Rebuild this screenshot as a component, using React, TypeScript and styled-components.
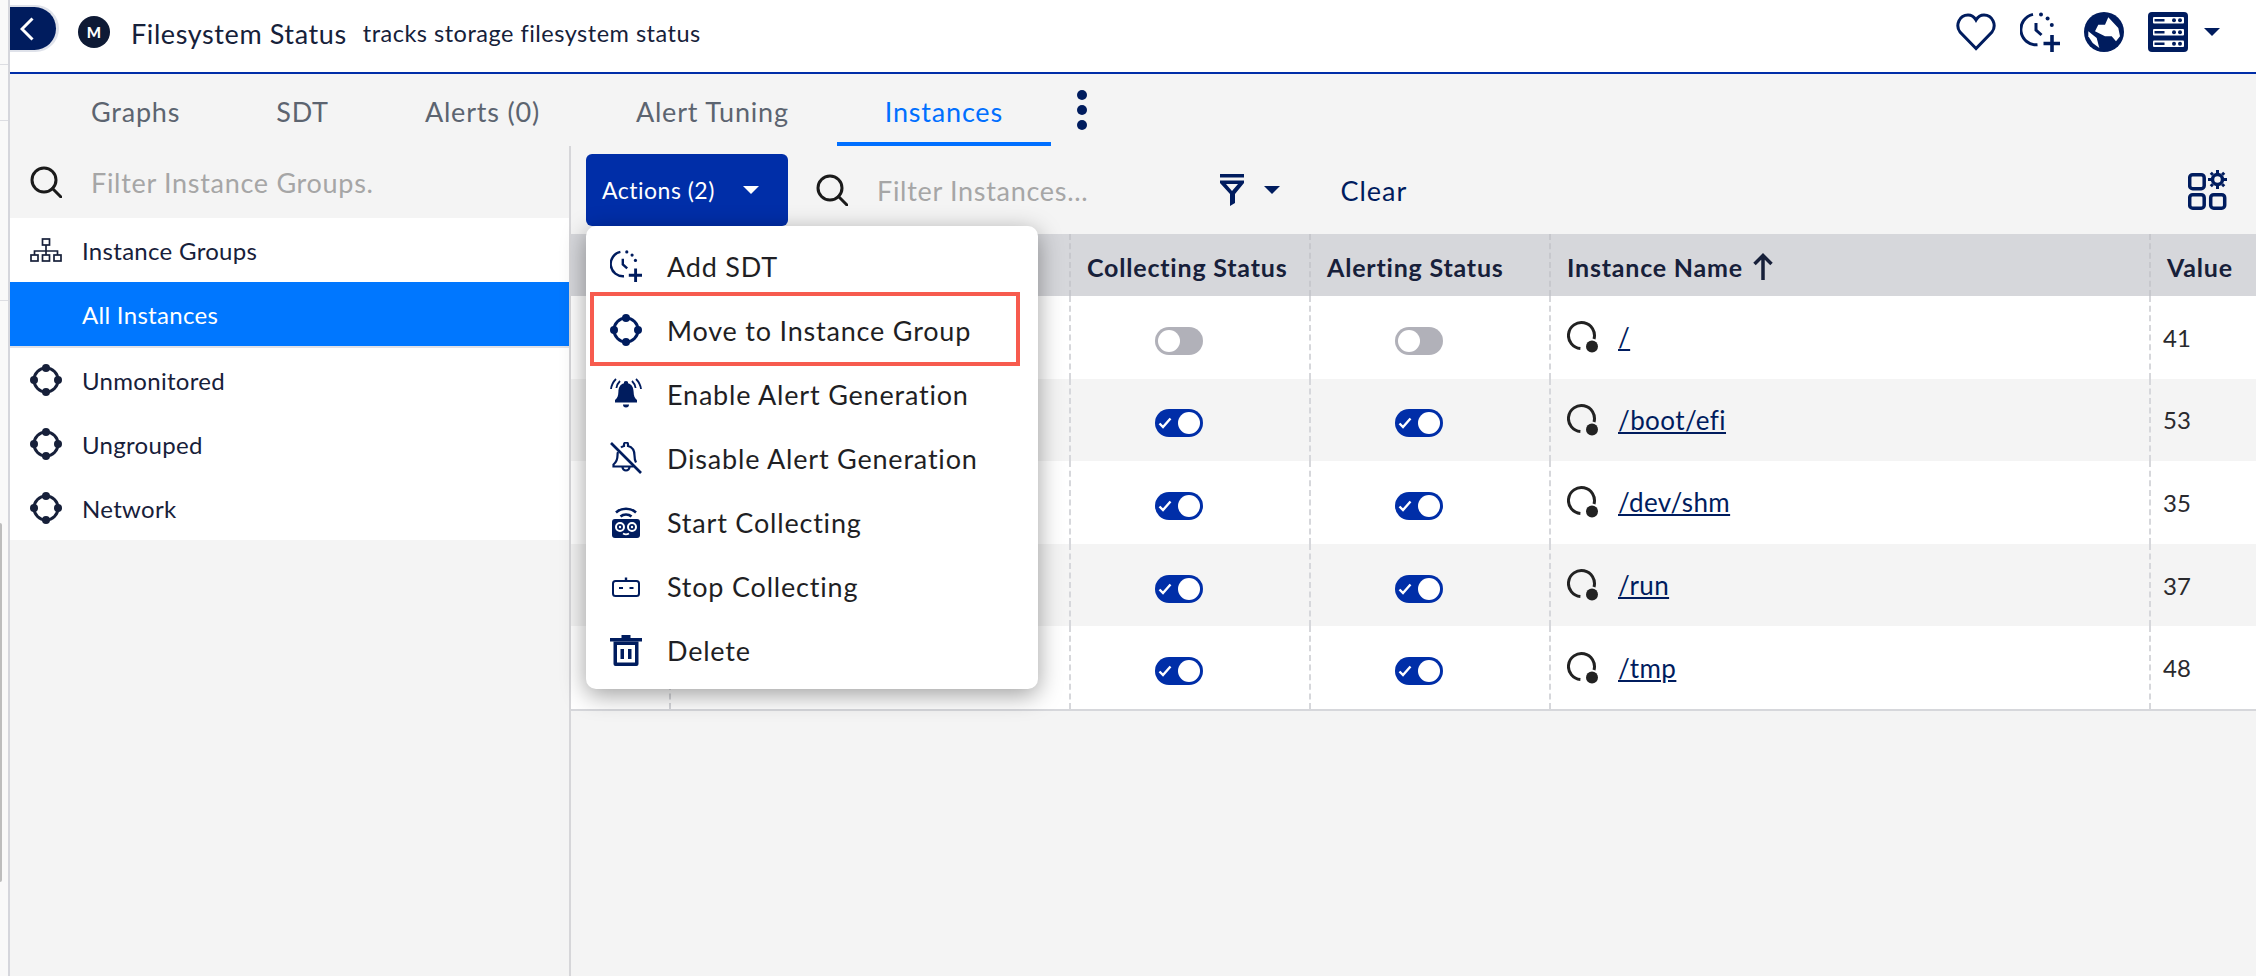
import React from 'react'
import styled, { createGlobalStyle } from 'styled-components'

const NAVY = '#001c5e'
const INK = '#17203a'
const BLUE = '#002ea8'
const RULE = '#d6d7db'

const GlobalStyle = createGlobalStyle`
	html, body {
		margin: 0;
		padding: 0;
		background: #f4f4f4;
	}
	body {
		font-family: 'Lato', 'Liberation Sans', sans-serif;
		color: ${INK};
	}
`

const Page = styled.div`
	display: flex;
	width: 2256px;
	height: 976px;
	overflow: hidden;
`

const Strip = styled.div`
	position: relative;
	flex: none;
	width: 8px;
	background: #f9f9f9;
	border-right: 2px solid #d5d6dc;
`

const StripBand = styled.div<{ $h: number }>`
	height: ${(p) => p.$h}px;
	border-bottom: 1px solid #dcdde2;
`

const StripThumb = styled.div`
	position: absolute;
	left: 0;
	top: 523px;
	width: 2px;
	height: 359px;
	background: #bdbdbd;
	border-radius: 0 2px 2px 0;
`

const Main = styled.div`
	flex: 1;
	display: flex;
	flex-direction: column;
	min-width: 0;
`

const Header = styled.header`
	flex: none;
	display: flex;
	align-items: center;
	box-sizing: border-box;
	height: 74px;
	background: #fff;
	border-bottom: 2px solid ${BLUE};
	padding: 0 36px 8px 0;
`

const BackButton = styled.button`
	flex: none;
	display: flex;
	align-items: center;
	justify-content: flex-start;
	align-self: flex-start;
	width: 46px;
	height: 43px;
	margin-top: 7px;
	padding: 0 0 0 10px;
	background: ${NAVY};
	border: 0;
	border-radius: 0 22px 22px 0;
	box-shadow: 1px 0 0 2px #dfe2ea;
`

const Logo = styled.span`
	flex: none;
	display: flex;
	align-items: center;
	justify-content: center;
	width: 32px;
	height: 32px;
	margin: 0 21px 0 22px;
	border-radius: 50%;
	background: #0e1a35;
	color: #fff;
	font-size: 15px;
	font-weight: 900;
`

const Title = styled.h1`
	margin: 3px 16px 0 0;
	font-size: 27px;
	font-weight: 400;
	letter-spacing: 0.6px;
	color: #16213a;
`

const Subtitle = styled.span`
	margin-top: 1px;
	font-size: 23.5px;
	letter-spacing: 0.5px;
	color: #16213a;
`

const HeaderIcons = styled.div`
	margin-left: auto;
	display: flex;
	align-items: center;
	gap: 24px;
	color: ${NAVY};
`

const HeaderCaret = styled.span`
	margin-left: -8px;
	line-height: 0;
`

const Tabs = styled.nav`
	flex: none;
	display: flex;
	align-items: center;
	height: 72px;
	padding-left: 33px;
`

const Tab = styled.div<{ $active?: boolean }>`
	display: flex;
	align-items: center;
	height: 72px;
	padding: 6px 48px 0;
	box-sizing: border-box;
	border-bottom: 4px solid ${(p) => (p.$active ? '#006fff' : 'transparent')};
	font-size: 27px;
	letter-spacing: 0.8px;
	color: ${(p) => (p.$active ? '#006fff' : '#5c6470')};
`

const Kebab = styled.div`
	display: flex;
	flex-direction: column;
	gap: 5px;
	margin-left: 26px;
`

const KebabDot = styled.span`
	width: 10px;
	height: 10px;
	border-radius: 50%;
	background: ${NAVY};
`

const Body = styled.div`
	flex: 1;
	display: flex;
	min-height: 0;
`

const SidePanel = styled.aside`
	flex: none;
	width: 559px;
	border-right: 2px solid #d6d6d9;
`

const SideSearch = styled.div`
	display: flex;
	align-items: center;
	gap: 29px;
	height: 72px;
	padding-left: 20px;
	color: #1a1a1a;
`

const Placeholder = styled.span`
	font-size: 27px;
	letter-spacing: 0.7px;
	color: #a6a6a6;
`

const GroupList = styled.ul`
	list-style: none;
	margin: 0;
	padding: 0;
	background: #fff;
`

const GroupRow = styled.li<{ $active?: boolean }>`
	display: flex;
	align-items: center;
	gap: 20px;
	height: 64px;
	padding-left: 20px;
	font-size: 24px;
	letter-spacing: 0.3px;
	color: ${(p) => (p.$active ? '#fff' : INK)};
	background: ${(p) => (p.$active ? '#0077ff' : 'transparent')};
	border-bottom: ${(p) => (p.$active ? '2px solid #dfe1e8' : '0')};
`

const IconGap = styled.span`
	flex: none;
	width: 32px;
`

const Pane = styled.section`
	flex: 1;
	min-width: 0;
`

const Toolbar = styled.div`
	display: flex;
	align-items: center;
	height: 88px;
	padding: 0 28px 0 15px;
`

const ActionsWrap = styled.div`
	position: relative;
	flex: none;
`

const ActionsButton = styled.button`
	display: flex;
	align-items: center;
	width: 202px;
	height: 72px;
	padding: 0 0 0 16px;
	border: 0;
	border-radius: 6px;
	background: ${BLUE};
	color: #fff;
	font-family: inherit;
	font-size: 23px;
	letter-spacing: 0.5px;
`

const ActionsCaret = styled.span`
	margin-left: 28px;
	line-height: 0;
`

const Menu = styled.ul`
	position: absolute;
	z-index: 5;
	top: 72px;
	left: 0;
	width: 452px;
	margin: 0;
	padding: 8px 0 7px;
	box-sizing: border-box;
	list-style: none;
	background: #fff;
	border-radius: 10px;
	box-shadow: 0 6px 24px rgba(0, 0, 0, 0.38);
`

const MenuItem = styled.li<{ $marked?: boolean }>`
	position: relative;
	display: flex;
	align-items: center;
	gap: 25px;
	height: 64px;
	padding-left: 24px;
	font-size: 27px;
	letter-spacing: 0.8px;
	color: ${NAVY};

	&::after {
		content: '';
		display: ${(p) => (p.$marked ? 'block' : 'none')};
		position: absolute;
		left: 4px;
		top: -6px;
		width: 430px;
		height: 74px;
		box-sizing: border-box;
		border: 4px solid #f75b4e;
	}
`

const MenuLabel = styled.span`
	color: #1f1f24;
`

const FilterSearch = styled.div`
	display: flex;
	align-items: center;
	gap: 29px;
	margin-left: 28px;
	color: #1a1a1a;
`

const FilterWrap = styled.div`
	display: flex;
	align-items: center;
	gap: 20px;
	margin-left: 132px;
	color: ${NAVY};
`

const ClearLink = styled.span`
	margin-left: 60px;
	font-size: 27px;
	letter-spacing: 1px;
	color: ${NAVY};
`

const GearWrap = styled.span`
	margin-left: auto;
	line-height: 0;
	color: ${NAVY};
`

const Table = styled.table`
	width: 1685px;
	table-layout: fixed;
	border-collapse: separate;
	border-spacing: 0;
	border-bottom: 2px solid ${RULE};
`

const HeadCell = styled.th<{ $w: number }>`
	width: ${(p) => p.$w}px;
	height: 62px;
	box-sizing: border-box;
	padding: 3px 0 0 16px;
	background: ${RULE};
	border-left: 2px dashed #c7c8cd;
	text-align: left;
	font-size: 25px;
	font-weight: 700;
	letter-spacing: 0.8px;
	color: ${INK};
	white-space: nowrap;

	&:first-child {
		border-left: 0;
	}
`

const HeadInner = styled.span`
	display: inline-flex;
	align-items: center;
	gap: 10px;
`

const Row = styled.tr<{ $odd: boolean }>`
	background: ${(p) => (p.$odd ? '#f4f4f4' : '#fff')};
`

const Cell = styled.td`
	height: 82.6px;
	box-sizing: border-box;
	padding: 0 0 0 12px;
	border-left: 2px dashed ${RULE};
	text-align: left;
	font-size: 24px;
	color: #2a2a2e;

	&:first-child {
		border-left: 0;
	}
`

const ToggleCell = styled(Cell)`
	padding: 3px 22px 0 0;
	text-align: center;
`

const NameWrap = styled.div`
	display: flex;
	align-items: center;
	gap: 19px;
	padding-left: 4px;
`

const NameLink = styled.a`
	font-size: 26px;
	letter-spacing: 0.4px;
	color: ${NAVY};
	text-decoration: underline;
`

const Toggle = styled.span<{ $on: boolean }>`
	display: inline-flex;
	align-items: center;
	justify-content: ${(p) => (p.$on ? 'space-between' : 'flex-start')};
	width: 48px;
	height: 28px;
	padding: 0 3px;
	box-sizing: border-box;
	border-radius: 14px;
	background: ${(p) => (p.$on ? BLUE : '#b1b1b9')};
	vertical-align: middle;
`

const Thumb = styled.span`
	width: 22px;
	height: 22px;
	border-radius: 50%;
	background: #fff;
`

const Search = () => (
	<svg width="32" height="32" viewBox="0 0 32 32" fill="none" stroke="currentColor" strokeWidth="3">
		<circle cx="14" cy="14" r="12" />
		<path d="M22.5 22.5 31 31" strokeLinecap="round" />
	</svg>
)

const Caret = ({ color = 'currentColor' }: { color?: string }) => (
	<svg width="16" height="8" viewBox="0 0 16 8" style={{ display: 'block' }}>
		<path d="M0 0h16L8 8z" fill={color} />
	</svg>
)

const GroupIcon = () => (
	<svg width="32" height="32" viewBox="0 0 32 32" fill="none" stroke="currentColor">
		<circle cx="16" cy="16" r="12" strokeWidth="3" />
		<g fill="currentColor" stroke="none">
			<circle cx="16" cy="4" r="4" />
			<circle cx="28" cy="16" r="4" />
			<circle cx="16" cy="28" r="4" />
			<circle cx="4" cy="16" r="4" />
		</g>
	</svg>
)

const TreeIcon = () => (
	<svg width="32" height="24" viewBox="0 0 32 24" fill="none" stroke="currentColor" strokeWidth="1.7">
		<rect x="12.5" y="1" width="7" height="6" />
		<path d="M16 7v6M4.5 17v-4h23v4M16 13v4" />
		<rect x="1" y="17" width="7" height="6" />
		<rect x="12.5" y="17" width="7" height="6" />
		<rect x="24" y="17" width="7" height="6" />
	</svg>
)

const ClockPlus = ({ size }: { size: number }) => (
	<svg width={size} height={size} viewBox="0 0 40 40" fill="none" stroke="currentColor" strokeWidth="3">
		<path d="M13 2.4A15.4 15.4 0 0 0 17.5 32.8" />
		<path d="M16 11v7l5.5 5" />
		<g fill="currentColor" stroke="none">
			<circle cx="21" cy="2.4" r="2" />
			<circle cx="27.6" cy="6.4" r="2" />
			<circle cx="31.8" cy="13" r="2" />
		</g>
		<path d="M32 23v17M23.5 31.5h16.5" strokeWidth="3.6" />
	</svg>
)

const Bell = () => (
	<svg width="32" height="32" viewBox="0 0 32 32" fill="none" stroke="currentColor" strokeWidth="1.8">
		<path
			d="M16 3a2 2 0 0 1 2 2.3c4 1 5.5 4.5 5.6 8.5.1 4 1 6.5 3.4 8.2v2.5H5V22c2.4-1.7 3.3-4.2 3.4-8.2.1-4 1.6-7.5 5.6-8.5A2 2 0 0 1 16 3z"
			fill="currentColor"
			stroke="none"
		/>
		<path d="M13 26.5h6a3 3 0 0 1-6 0z" fill="currentColor" stroke="none" />
		<path d="M6 1C3 4 1.5 7 1 11M10 3C8 5 6.8 7 6.4 10M26 1c3 3 4.5 6 5 10M22 3c2 2 3.2 4 3.6 7" />
	</svg>
)

const BellOff = () => (
	<svg width="32" height="32" viewBox="0 0 32 32" fill="none" stroke="currentColor" strokeWidth="2.2">
		<path d="M11 5.5c1-.8 2-1.2 3-1.500V2.500a2 2 0 0 1 4 0V4c4 1 6.500 4.500 6.500 9.500 0 3 .5 5 1.500 7" />
		<path d="M8 10c-.4 1-.5 2.200-.5 3.500 0 4-1.500 7-4 9v2h20" />
		<path d="M12.500 25a3.500 3.500 0 0 0 7 0" />
		<path d="M1 1l30 30" strokeWidth="2.6" />
	</svg>
)

const RobotOn = () => (
	<svg width="32" height="32" viewBox="0 0 32 32" fill="none">
		<path d="M6 6.500C11.500 1.500 20.500 1.500 26 6.500M10.500 10.500c3-2.700 8-2.700 11 0" stroke="currentColor" strokeWidth="2.6" />
		<rect x="2" y="13" width="28" height="19" rx="3" fill="currentColor" />
		<circle cx="10" cy="21" r="4" stroke="#fff" strokeWidth="2" />
		<circle cx="22" cy="21" r="4" stroke="#fff" strokeWidth="2" />
		<circle cx="10" cy="21" r="1.2" fill="#fff" />
		<circle cx="22" cy="21" r="1.2" fill="#fff" />
		<path d="M13 27.500c2 1.200 4 1.200 6 0" stroke="#fff" strokeWidth="1.8" />
	</svg>
)

const RobotOff = () => (
	<svg width="32" height="32" viewBox="0 0 32 32" fill="none" stroke="currentColor" strokeWidth="2">
		<rect x="3" y="11" width="26" height="15" rx="2.5" />
		<path d="M16 7.500v3.500" strokeWidth="2.4" />
		<path d="M9 18h4M19.500 18h4" />
	</svg>
)

const Trash = () => (
	<svg width="32" height="32" viewBox="0 0 32 32" fill="currentColor">
		<path d="M11.500 1h9v3h-9zM0 4h32v3.500H0z" />
		<path d="M3.500 7.500h25V30a2 2 0 0 1-2 2h-21a2 2 0 0 1-2-2zM7 11v17.500h18V11z" fillRule="evenodd" />
		<path d="M10.500 15h3.500v10h-3.500zM18 15h3.500v10H18z" />
	</svg>
)

const StatusIcon = () => (
	<svg width="32" height="32" viewBox="0 0 32 32" fill="none" style={{ flex: 'none' }}>
		<path d="M27 18A13 13 0 1 0 13.4 27.5" stroke="#222" strokeWidth="3" />
		<circle cx="25" cy="25.5" r="6" fill="#222" />
	</svg>
)

const menuItems: { label: string; icon: React.ReactNode; marked?: boolean }[] = [
	{ label: 'Add SDT', icon: <ClockPlus size={32} /> },
	{ label: 'Move to Instance Group', icon: <GroupIcon />, marked: true },
	{ label: 'Enable Alert Generation', icon: <Bell /> },
	{ label: 'Disable Alert Generation', icon: <BellOff /> },
	{ label: 'Start Collecting', icon: <RobotOn /> },
	{ label: 'Stop Collecting', icon: <RobotOff /> },
	{ label: 'Delete', icon: <Trash /> },
]

const rows = [
	{ name: '/', value: 41, on: false },
	{ name: '/boot/efi', value: 53, on: true },
	{ name: '/dev/shm', value: 35, on: true },
	{ name: '/run', value: 37, on: true },
	{ name: '/tmp', value: 48, on: true },
]

const StatusToggle = ({ on }: { on: boolean }) => (
	<Toggle $on={on}>
		{on && (
			<svg width="14" height="12" viewBox="0 0 14 12" fill="none" stroke="#fff" strokeWidth="2.4">
				<path d="M1.500 6.500 5 10l7.500-8.500" />
			</svg>
		)}
		<Thumb />
	</Toggle>
)

export default function App() {
	return (
		<Page>
			<GlobalStyle />
			<Strip>
				<StripBand $h={64} />
				<StripBand $h={55} />
				<StripBand $h={179} />
				<StripThumb />
			</Strip>
			<Main>
				<Header>
					<BackButton aria-label="Back">
						<svg width="14" height="24" viewBox="0 0 14 24" fill="none" stroke="#fff" strokeWidth="3">
							<path d="M12.500 1.500 2 12l10.500 10.500" />
						</svg>
					</BackButton>
					<Logo>M</Logo>
					<Title>Filesystem Status</Title>
					<Subtitle>tracks storage filesystem status</Subtitle>
					<HeaderIcons>
						<svg width="40" height="40" viewBox="0 0 40 40" fill="none" stroke="currentColor" strokeWidth="3">
							<path d="M20 36.500 4 20C-1 13 3.500 3 12 3c3.500 0 6.300 2 8 5 1.700-3 4.500-5 8-5 8.500 0 13 10 8 17z" />
						</svg>
						<ClockPlus size={40} />
						<svg width="40" height="40" viewBox="0 0 40 40">
							<circle cx="20" cy="20" r="20" fill="currentColor" />
							<path d="M24.300 5.300 34.300 16 36 24.300 32 29.300 27.700 24.300H21L11 19.300 14.300 12.700H21z" fill="#fff" />
							<path d="M4.300 19.300 12.700 26 15.300 36 8.700 31 4.300 24.300z" fill="#fff" />
						</svg>
						<svg width="40" height="40" viewBox="0 0 40 40">
							<rect width="40" height="40" rx="4" fill="currentColor" />
							{[5, 17, 28.5].map((y) => (
								<g key={y}>
									<rect x="5" y={y} width="31" height="6.500" rx="1" fill="#fff" />
									<rect x="6.500" y={y + 2} width="10" height="2.500" fill="currentColor" />
									<circle cx="26" cy={y + 3.2} r="2" fill="currentColor" />
									<circle cx="32" cy={y + 3.2} r="2" fill="currentColor" />
								</g>
							))}
						</svg>
						<HeaderCaret>
							<Caret />
						</HeaderCaret>
					</HeaderIcons>
				</Header>
				<Tabs>
					<Tab>Graphs</Tab>
					<Tab>SDT</Tab>
					<Tab>Alerts (0)</Tab>
					<Tab>Alert Tuning</Tab>
					<Tab $active>Instances</Tab>
					<Kebab>
						<KebabDot />
						<KebabDot />
						<KebabDot />
					</Kebab>
				</Tabs>
				<Body>
					<SidePanel>
						<SideSearch>
							<Search />
							<Placeholder>Filter Instance Groups.</Placeholder>
						</SideSearch>
						<GroupList>
							<GroupRow>
								<TreeIcon />
								Instance Groups
							</GroupRow>
							<GroupRow $active>
								<IconGap />
								All Instances
							</GroupRow>
							{['Unmonitored', 'Ungrouped', 'Network'].map((name) => (
								<GroupRow key={name}>
									<GroupIcon />
									{name}
								</GroupRow>
							))}
						</GroupList>
					</SidePanel>
					<Pane>
						<Toolbar>
							<ActionsWrap>
								<ActionsButton>
									Actions (2)
									<ActionsCaret>
										<Caret color="#fff" />
									</ActionsCaret>
								</ActionsButton>
								<Menu>
									{menuItems.map((item) => (
										<MenuItem key={item.label} $marked={item.marked}>
											{item.icon}
											<MenuLabel>{item.label}</MenuLabel>
										</MenuItem>
									))}
								</Menu>
							</ActionsWrap>
							<FilterSearch>
								<Search />
								<Placeholder>Filter Instances...</Placeholder>
							</FilterSearch>
							<FilterWrap>
								<svg width="24" height="32" viewBox="0 0 24 32" fill="currentColor">
									<path d="M0 0h24v3.500H0z" />
									<path d="M0 6.500h24v2.500L15 20v9l-5 3V20L0 9zM6 10l6 7 6-7z" fillRule="evenodd" />
								</svg>
								<Caret />
							</FilterWrap>
							<ClearLink>Clear</ClearLink>
							<GearWrap>
								<svg width="40" height="40" viewBox="0 0 40 40" fill="none" stroke="currentColor" strokeWidth="3.5">
									<rect x="1.700" y="4.700" width="14.500" height="14" rx="3" />
									<rect x="1.700" y="24.700" width="14.500" height="13.500" rx="3" />
									<rect x="22.700" y="24.700" width="14" height="13.500" rx="3" />
									<circle cx="29.500" cy="9.500" r="5" />
									<path
										d="M29.500 0v3M29.500 16v3M20 9.500h3M36 9.500h3M22.800 2.800l2 2M34.200 14.200l2 2M36.200 2.800l-2 2M24.800 14.200l-2 2"
										strokeWidth="3"
									/>
								</svg>
							</GearWrap>
						</Toolbar>
						<Table>
							<thead>
								<tr>
									<HeadCell $w={98} />
									<HeadCell $w={400} />
									<HeadCell $w={240}>Collecting Status</HeadCell>
									<HeadCell $w={240}>Alerting Status</HeadCell>
									<HeadCell $w={600}>
										<HeadInner>
											Instance Name
											<svg width="20" height="28" viewBox="0 0 20 28" fill="none" stroke={INK} strokeWidth="3.5">
												<path d="M10 27V3M1.500 11 10 2.500l8.500 8.500" />
											</svg>
										</HeadInner>
									</HeadCell>
									<HeadCell $w={107}>Value</HeadCell>
								</tr>
							</thead>
							<tbody>
								{rows.map((row, i) => (
									<Row key={row.name} $odd={i % 2 === 1}>
										<Cell />
										<Cell />
										<ToggleCell>
											<StatusToggle on={row.on} />
										</ToggleCell>
										<ToggleCell>
											<StatusToggle on={row.on} />
										</ToggleCell>
										<Cell>
											<NameWrap>
												<StatusIcon />
												<NameLink>{row.name}</NameLink>
											</NameWrap>
										</Cell>
										<Cell>{row.value}</Cell>
									</Row>
								))}
							</tbody>
						</Table>
					</Pane>
				</Body>
			</Main>
		</Page>
	)
}
